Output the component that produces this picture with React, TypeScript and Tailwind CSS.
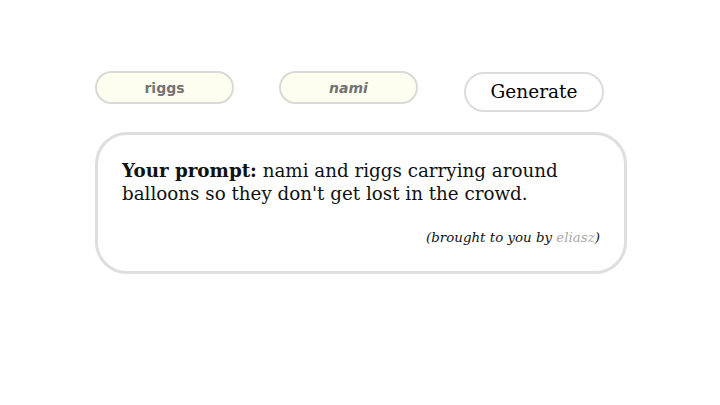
export default function App() {
  return (
    <div className="w-[720px] h-[405px] bg-white pt-[71px]">
      <div className="w-[532px] ml-[95px]">
        <div className="flex items-start gap-[45px]">
          <input
            defaultValue="riggs"
            className="w-[139px] h-[33px] rounded-full border-[2.5px] border-[#d9d9d6] bg-[#fefef0] text-center text-[14px] font-bold text-[#737373] outline-none font-['DejaVu_Sans',sans-serif]"
          />
          <input
            defaultValue="nami"
            className="w-[139px] h-[33px] rounded-full border-[2.5px] border-[#d9d9d6] bg-[#fefef0] text-center text-[14px] font-bold italic text-[#737373] outline-none font-['DejaVu_Sans',sans-serif]"
          />
          <button className="mt-px ml-px w-[140px] h-[40px] rounded-full border-[2.5px] border-[#dcdcdc] bg-white text-[18.5px] text-black font-['DejaVu_Serif',serif]">
            Generate
          </button>
        </div>
        <div className="mt-[20px] w-[532px] rounded-[32px] border-[3px] border-[#dedede] px-[24px] pt-[24px] pb-[24px] font-['DejaVu_Serif',serif] text-[#111]">
          <p className="text-[18.3px] leading-[23px]">
            <strong className="font-bold">Your prompt:</strong> nami and riggs carrying around balloons so they don't get lost in the crowd.
          </p>
          <p className="mt-[24px] text-right text-[13.4px] italic leading-[18px]">
            (brought to you by <span className="text-[#aaa]">eliasz</span>)
          </p>
        </div>
      </div>
    </div>
  );
}
